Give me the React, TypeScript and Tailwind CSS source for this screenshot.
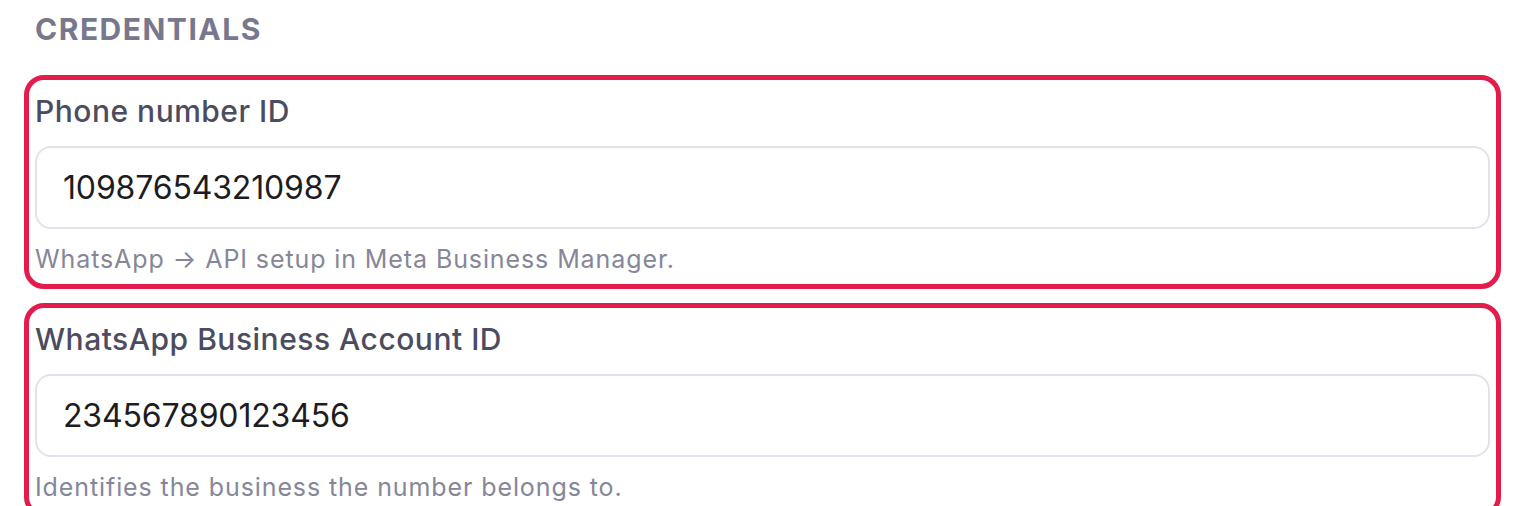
const fields = [
  {
    label: "Phone number ID",
    value: "109876543210987",
    hint: "WhatsApp → API setup in Meta Business Manager.",
  },
  {
    label: "WhatsApp Business Account ID",
    value: "234567890123456",
    hint: "Identifies the business the number belongs to.",
  },
]

const Field = ({ label, value, hint }: { label: string; value: string; hint: string }) => {
  return (
    <div className="rounded-[20px] border-[5px] border-[#e31c4b] px-[6px] pt-[13px] pb-[9px]">
      <label className="block h-[36px] text-[30px] leading-[36px] font-medium tracking-[0.5px] text-[#4c4c60]">
        {label}
      </label>
      <div className="mt-[17px] flex h-[83px] items-center rounded-[16px] border-2 border-[#e2e2ec] bg-white px-[26px]">
        <input
          readOnly
          value={value}
          className="w-full bg-transparent text-[32px] tracking-[-0.15px] text-[#1c1c22] outline-none"
        />
      </div>
      <p className="mt-[14px] h-[32px] text-[25px] leading-[32px] tracking-[0.9px] text-[#868699]">{hint}</p>
    </div>
  )
}

export default function App() {
  return (
    <div className="min-h-screen bg-white pl-[24px] pr-[28px] pt-[11px] font-['Inter',sans-serif]">
      <h3 className="h-[36px] pl-[11px] text-[30px] leading-[36px] font-bold uppercase tracking-[1.5px] text-[#77778e]">
        Credentials
      </h3>
      <div className="mt-[28px] flex flex-col gap-[14px]">
        {fields.map((f) => (
          <Field key={f.label} {...f} />
        ))}
      </div>
    </div>
  )
}
